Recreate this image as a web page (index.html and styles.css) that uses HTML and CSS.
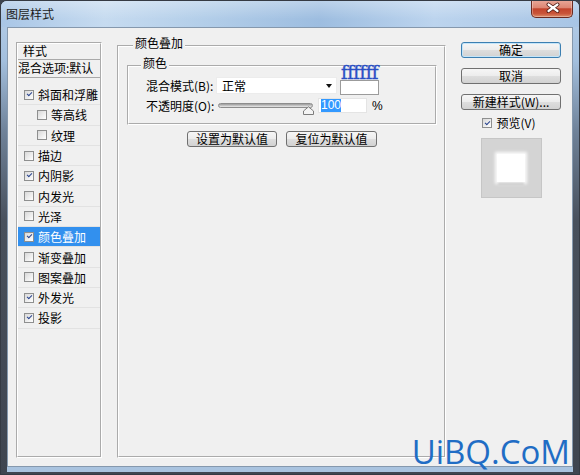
FILE: index.html
```html
<!DOCTYPE html>
<html lang="zh-CN">
<head>
    <meta charset="UTF-8">
    <meta name="viewport" content="width=device-width, initial-scale=1.0">
    <title>图层样式</title>
    <link rel="stylesheet" href="styles.css">
</head>
<body>
    <div class="window">
        <div class="titlebar">
            <span class="title">图层样式</span>
            <div class="close-btn">
                <svg width="42" height="17" viewBox="0 0 42 17">
                    <path d="M16.5 4.5 L25.5 11 M25.5 4.5 L16.5 11" stroke="#4a1710" stroke-width="4" stroke-linecap="round"/>
                    <path d="M16.5 4.5 L25.5 11 M25.5 4.5 L16.5 11" stroke="#fff" stroke-width="2.2" stroke-linecap="round"/>
                </svg>
            </div>
        </div>

        <div class="client">
            <!-- left: list of effects -->
            <div class="style-list">
                <div class="list-head">样式</div>
                <div class="list-blend">混合选项:默认</div>
                <div class="list-item"><span class="cb on"></span>斜面和浮雕</div>
                <div class="list-item sub"><span class="cb"></span>等高线</div>
                <div class="list-item sub"><span class="cb"></span>纹理</div>
                <div class="list-item"><span class="cb"></span>描边</div>
                <div class="list-item"><span class="cb on"></span>内阴影</div>
                <div class="list-item"><span class="cb"></span>内发光</div>
                <div class="list-item"><span class="cb"></span>光泽</div>
                <div class="list-item selected"><span class="cb on"></span>颜色叠加</div>
                <div class="list-item"><span class="cb"></span>渐变叠加</div>
                <div class="list-item"><span class="cb"></span>图案叠加</div>
                <div class="list-item"><span class="cb on"></span>外发光</div>
                <div class="list-item"><span class="cb on"></span>投影</div>
            </div>

            <!-- middle: settings -->
            <fieldset class="panel">
                <legend>颜色叠加</legend>
                <fieldset class="group">
                    <legend>颜色</legend>
                    <div class="field-row">
                        <span class="field-label">混合模式(B):</span>
                        <div class="select">
                            <span>正常</span>
                            <span class="select-arrow"></span>
                        </div>
                        <div class="swatch"><span class="swatch-note">ffffff</span></div>
                    </div>
                    <div class="field-row second">
                        <span class="field-label">不透明度(O):</span>
                        <div class="slider">
                            <div class="slider-track"></div>
                            <svg class="slider-thumb" width="11" height="9" viewBox="0 0 11 9">
                                <path d="M0.5 8.5 L0.5 5 L5.5 0.8 L10.5 5 L10.5 8.5 Z" fill="#f4f4f4" stroke="#7d7d7d"/>
                            </svg>
                        </div>
                        <div class="num-input"><span class="sel-text">100</span></div>
                        <span class="unit">%</span>
                    </div>
                </fieldset>
                <div class="panel-buttons">
                    <button class="btn btn-wide">设置为默认值</button>
                    <button class="btn btn-wide">复位为默认值</button>
                </div>
            </fieldset>

            <!-- right: dialog buttons -->
            <div class="side">
                <button class="btn btn-default">确定</button>
                <button class="btn">取消</button>
                <button class="btn">新建样式(W)...</button>
                <div class="preview-check"><span class="cb on"></span>预览(V)</div>
                <div class="preview">
                    <div class="preview-swatch"></div>
                </div>
            </div>
        </div>

        <div class="watermark">UiBQ.CoM</div>
    </div>
</body>
</html>
```

FILE: styles.css
```css
* {
    box-sizing: border-box;
}

body {
    margin: 0;
    background-color: #3d434d;
    font-family: "Noto Sans CJK SC", "Noto Sans", sans-serif;
    font-size: 12px;
    color: #000;
}

.window {
    position: relative;
    width: 580px;
    height: 475px;
    border: 1px solid #353a43;
    border-radius: 7px 7px 0 0;
    background: linear-gradient(180deg, #b8d0ea 0, #a3bfdd 60px, #6f8299 130px, #48505c 220px, #3f4550 100%);
    display: flex;
    flex-direction: column;
    overflow: hidden;
}

/* title bar */
.titlebar {
    height: 26px;
    display: flex;
    align-items: center;
    padding-left: 5px;
    background:
        linear-gradient(180deg, rgba(255, 255, 255, 0.3), rgba(255, 255, 255, 0) 70%),
        linear-gradient(90deg, #a9c6e6 0%, #c6dbf0 18%, #b3cee9 35%, #9dbde0 55%, #bcd4ee 75%, #a8c5e5 100%);
}

.title {
    flex: 1;
    line-height: 14px;
    color: #1b1b1b;
}

.close-btn {
    align-self: flex-start;
    margin-top: -1px;
    margin-right: 6px;
    width: 42px;
    height: 18px;
    border: 1px solid #6b2a20;
    border-top: none;
    border-radius: 0 0 5px 5px;
    background: linear-gradient(180deg, #e9a99a 0%, #dd8673 45%, #c2442c 52%, #c9553a 80%, #dc8e6b 100%);
    box-shadow: inset 0 0 0 1px rgba(255, 255, 255, 0.3);
}

.close-btn svg {
    display: block;
}

/* client area */
.client {
    height: 440px;
    margin: 0 6px;
    padding: 14px 11px 8px 8px;
    border: 1px solid #8598ad;
    background-color: #f0f0f0;
    display: flex;
    box-shadow: 0 5px 0 #a9c3df;
}

/* left list */
.style-list {
    width: 86px;
    flex-shrink: 0;
    border: 2px groove #fff;
    overflow: hidden;
}

.list-head {
    height: 16px;
    line-height: 14px;
    padding-left: 5px;
    border-bottom: 1px solid #a9a9a9;
}

.list-blend {
    height: 18px;
    line-height: 16px;
    white-space: nowrap;
    border-bottom: 1px solid #a9a9a9;
    margin-bottom: 7px;
}

.list-item {
    height: 20.3px;
    display: flex;
    align-items: center;
    padding-left: 6px;
    white-space: nowrap;
    border-bottom: 1px solid #e2e2e2;
}

.list-item.sub {
    padding-left: 19px;
}

.list-item.selected {
    background-color: #3290ee;
    color: #fff;
}

.cb {
    width: 10px;
    height: 10px;
    flex-shrink: 0;
    margin-right: 4px;
    border: 1px solid #8e8f8f;
    background: linear-gradient(135deg, #d8d8d8, #fff);
    display: inline-flex;
    align-items: center;
    justify-content: center;
}

.cb.on::after {
    content: "";
    box-sizing: content-box;
    width: 4px;
    height: 2px;
    border-left: 1.6px solid #2a4590;
    border-bottom: 1.6px solid #2a4590;
    transform: translateY(-1px) rotate(-45deg);
}

/* main panel */
.panel {
    width: 329px;
    flex-shrink: 0;
    margin: -6px 15px 0 15px;
    padding: 0 7px 0 8px;
    border: 2px groove #fff;
    min-width: 0;
}

.panel > legend,
.group > legend {
    padding: 0 2px 6px;
    line-height: 14px;
}

.panel > legend {
    margin-left: 6px;
}

.group {
    margin: 0;
    padding: 1px 0 10px 0;
    border: 2px groove #fff;
    min-width: 0;
}

.group > legend {
    margin-left: 12px;
}

.field-row {
    display: flex;
    align-items: center;
    height: 17px;
    padding-left: 17px;
}

.field-row.second {
    height: 15px;
    margin-top: 4px;
}

.field-label {
    width: 70px;
    white-space: nowrap;
}

.select {
    width: 121px;
    height: 17px;
    display: flex;
    align-items: center;
    justify-content: space-between;
    padding: 0 4px 0 5px;
    background-color: #fff;
    border: 1px solid #ececec;
}

.select-arrow {
    width: 0;
    height: 0;
    border-left: 3.5px solid transparent;
    border-right: 3.5px solid transparent;
    border-top: 4px solid #111;
}

.swatch {
    position: relative;
    align-self: flex-start;
    margin-top: 3px;
    margin-left: 3px;
    width: 39px;
    height: 15px;
    border: 1px solid #9b9b9b;
    background-color: #fff;
}

.swatch-note {
    position: absolute;
    left: 0;
    bottom: 100%;
    font-family: "DejaVu Serif", serif;
    font-size: 18px;
    line-height: 16px;
    letter-spacing: -0.5px;
    color: #2a4fc5;
    -webkit-text-stroke: 0.4px #2a4fc5;
}

.slider {
    position: relative;
    width: 100px;
    height: 15px;
    display: flex;
    align-items: center;
}

.slider-track {
    width: 95px;
    height: 5px;
    margin-left: 2px;
    border: 1px solid #8d8d8d;
    border-radius: 3px;
    background: linear-gradient(180deg, #9c9c9c, #e9e9e9);
}

.slider-thumb {
    position: absolute;
    right: 2px;
    top: 8px;
}

.num-input {
    width: 49px;
    height: 15px;
    margin-left: 2px;
    padding-left: 2px;
    display: flex;
    align-items: center;
    background-color: #fff;
    border: 1px solid #e4e4e4;
    font-family: "Liberation Sans", Arial, sans-serif;
}

.sel-text {
    background-color: #3399ff;
    color: #fff;
    line-height: 13px;
}

.unit {
    margin-left: 5px;
    font-family: "Liberation Sans", Arial, sans-serif;
}

.panel-buttons {
    display: flex;
    justify-content: center;
    gap: 9px;
    margin-top: 6px;
}

/* buttons */
.btn {
    height: 16px;
    margin: 0;
    padding: 0;
    border: 1px solid #707070;
    border-radius: 3px;
    background: linear-gradient(180deg, #f6f6f6 0, #ececec 50%, #dedede 50%, #d2d2d2 100%);
    font-family: "Noto Sans CJK SC", "Noto Sans", sans-serif;
    font-size: 12px;
    line-height: 14px;
    color: #000;
}

.btn-wide {
    width: 90px;
}

.btn-wide + .btn-wide {
    width: 91px;
}

.btn-default {
    border-color: #3c7fb1;
    box-shadow: inset 0 0 0 1px #c4e5f9;
}

/* right column */
.side {
    width: 100px;
    flex-shrink: 0;
    display: flex;
    flex-direction: column;
}

.side .btn {
    margin-bottom: 10px;
}

.preview-check {
    display: flex;
    align-items: center;
    justify-content: center;
    height: 14px;
    margin-top: -4px;
    padding-right: 4px;
    line-height: 14px;
}

.preview {
    align-self: center;
    width: 61px;
    height: 60px;
    margin-top: 8px;
    border: 1px solid #c6c6c6;
    background-color: #d4d4d4;
    display: flex;
    align-items: center;
    justify-content: center;
}

.preview-swatch {
    width: 28px;
    height: 28px;
    background-color: #fff;
    box-shadow: 0 0 3px 2px rgba(255, 255, 255, 0.9), 0 3px 2px -1px rgba(0, 0, 0, 0.35);
}

.watermark {
    position: absolute;
    right: 9px;
    bottom: 6px;
    font-family: "Open Sans", "Noto Sans", sans-serif;
    font-size: 33px;
    line-height: 33px;
    color: #1f6dc5;
}
```
